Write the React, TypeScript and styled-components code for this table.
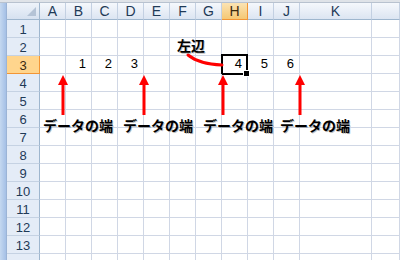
import React from 'react';
import styled, { createGlobalStyle } from 'styled-components';

const GlobalStyle = createGlobalStyle`
  html, body {
    margin: 0;
    padding: 0;
    background: #fff;
  }
  body {
    font-family: "Liberation Sans", Arial, sans-serif;
  }
`;

const COLS = ['A', 'B', 'C', 'D', 'E', 'F', 'G', 'H', 'I', 'J', 'K', ''];
// 13 full rows plus the top edge of row 14, whose number is below the fold
const ROWS = 14;
const VISIBLE_LABELS = 13;
const DATA: Record<string, string> = {
  B3: '1',
  C3: '2',
  D3: '3',
  H3: '4',
  I3: '5',
  J3: '6',
};
const ACTIVE_COL = 'H';
const ACTIVE_ROW = 3;

const ARROWS = [63, 144, 223, 300];
const LABELS = [43, 123, 203, 280];

export default function App() {
  return (
    <Page>
      <GlobalStyle />
      <TopBand />
      <Body>
        <LeftBand />
        <Sheet>
          <Corner />
          {COLS.map((c, i) => (
            <ColHeader key={i} $active={c === ACTIVE_COL}>
              {c}
            </ColHeader>
          ))}
          {Array.from({ length: ROWS }, (_, r) => {
            const row = r + 1;
            return (
              <React.Fragment key={row}>
                <RowHeader $active={row === ACTIVE_ROW}>
                  {row <= VISIBLE_LABELS ? row : ''}
                </RowHeader>
                {COLS.map((c, i) => {
                  const ref = c + row;
                  return (
                    <Cell key={i} $selected={c === ACTIVE_COL && row === ACTIVE_ROW}>
                      {DATA[ref]}
                    </Cell>
                  );
                })}
              </React.Fragment>
            );
          })}
        </Sheet>
      </Body>

      <Overlay width="400" height="260" viewBox="0 0 400 260">
        <path
          d="M188 55 Q 199 64 222 65"
          fill="none"
          stroke="#f00"
          strokeWidth="3"
          strokeLinecap="round"
        />
        {ARROWS.map((x) => (
          <g key={x} fill="#f00">
            <polygon points={`${x},75 ${x - 5},85 ${x + 5},85`} />
            <rect x={x - 1.5} y={84} width={3} height={31} />
          </g>
        ))}
      </Overlay>

      <Note style={{ left: 177, top: 38 }}>左辺</Note>
      {LABELS.map((x) => (
        <Note key={x} style={{ left: x, top: 118 }}>
          データの端
        </Note>
      ))}
    </Page>
  );
}

const Page = styled.div`
  position: relative;
  width: 400px;
  height: 260px;
  overflow: hidden;
  background: #fff;
`;

const TopBand = styled.div`
  height: 3px;
  background: #dfe3e8;
  border-bottom: 1px solid #b8c2cf;
  box-sizing: border-box;
`;

const Body = styled.div`
  display: flex;
  height: 257px;
`;

const LeftBand = styled.div`
  width: 7px;
  flex: none;
  background: linear-gradient(to right, #c4d8f0, #a5c0e6);
  border-right: 1px solid #9bb4d6;
  box-sizing: border-box;
`;

const Sheet = styled.div`
  flex: 1;
  display: grid;
  grid-template-columns: 33px repeat(10, 26px) 72px 1fr;
  grid-template-rows: 17px;
  grid-auto-rows: 18px;
  font-size: 13px;
`;

const Corner = styled.div`
  position: relative;
  box-sizing: border-box;
  background: linear-gradient(#eef3fa, #d6e1f0);
  border-right: 1px solid #9eb6ce;
  border-bottom: 1px solid #9eb6ce;

  &::after {
    content: '';
    position: absolute;
    right: 3px;
    bottom: 3px;
    border-left: 9px solid transparent;
    border-bottom: 9px solid #b4c3d6;
  }
`;

const ColHeader = styled.div<{ $active: boolean }>`
  box-sizing: border-box;
  display: flex;
  align-items: center;
  justify-content: center;
  font-size: 14px;
  color: ${(p) => (p.$active ? '#3b2a10' : '#1f3a57')};
  background: ${(p) =>
    p.$active
      ? 'linear-gradient(#fbe3b3, #f5c874)'
      : 'linear-gradient(#f5f8fc, #dce5f2)'};
  border-right: 1px solid ${(p) => (p.$active ? '#f29536' : '#c3d0e2')};
  border-bottom: 1px solid ${(p) => (p.$active ? '#f29536' : '#9eb6ce')};
`;

const RowHeader = styled.div<{ $active: boolean }>`
  box-sizing: border-box;
  display: flex;
  align-items: center;
  justify-content: center;
  padding-top: 1px;
  font-size: 13px;
  color: ${(p) => (p.$active ? '#3b2a10' : '#1f3a57')};
  background: ${(p) => (p.$active ? '#ffd58d' : '#e4ecf7')};
  border-right: 1px solid ${(p) => (p.$active ? '#f29536' : '#9eb6ce')};
  border-bottom: 1px solid ${(p) => (p.$active ? '#f29536' : '#c5d2e3')};
`;

const Cell = styled.div<{ $selected: boolean }>`
  position: relative;
  box-sizing: border-box;
  display: flex;
  align-items: flex-end;
  justify-content: flex-end;
  padding: 0 5px 2px 0;
  font-size: 13px;
  line-height: 14px;
  color: #000;
  border-right: 1px solid #d0d7e5;
  border-bottom: 1px solid #d0d7e5;

  ${(p) =>
    p.$selected &&
    `
    &::after {
      content: '';
      position: absolute;
      left: -1px;
      top: -2px;
      right: -1px;
      bottom: -2px;
      border: 2px solid #000;
    }
    &::before {
      content: '';
      position: absolute;
      right: -3px;
      bottom: -4px;
      width: 5px;
      height: 5px;
      background: #000;
      border: 1px solid #fff;
      z-index: 1;
    }
  `}
`;

const Overlay = styled.svg`
  position: absolute;
  left: 0;
  top: 0;
  pointer-events: none;
`;

const Note = styled.div`
  position: absolute;
  font-family: "Noto Sans CJK JP", "Noto Sans", sans-serif;
  font-size: 14px;
  font-weight: 700;
  line-height: 14px;
  color: #000;
  white-space: nowrap;
  text-shadow: 1px 1px 0 rgba(0, 0, 0, 0.25);
`;
